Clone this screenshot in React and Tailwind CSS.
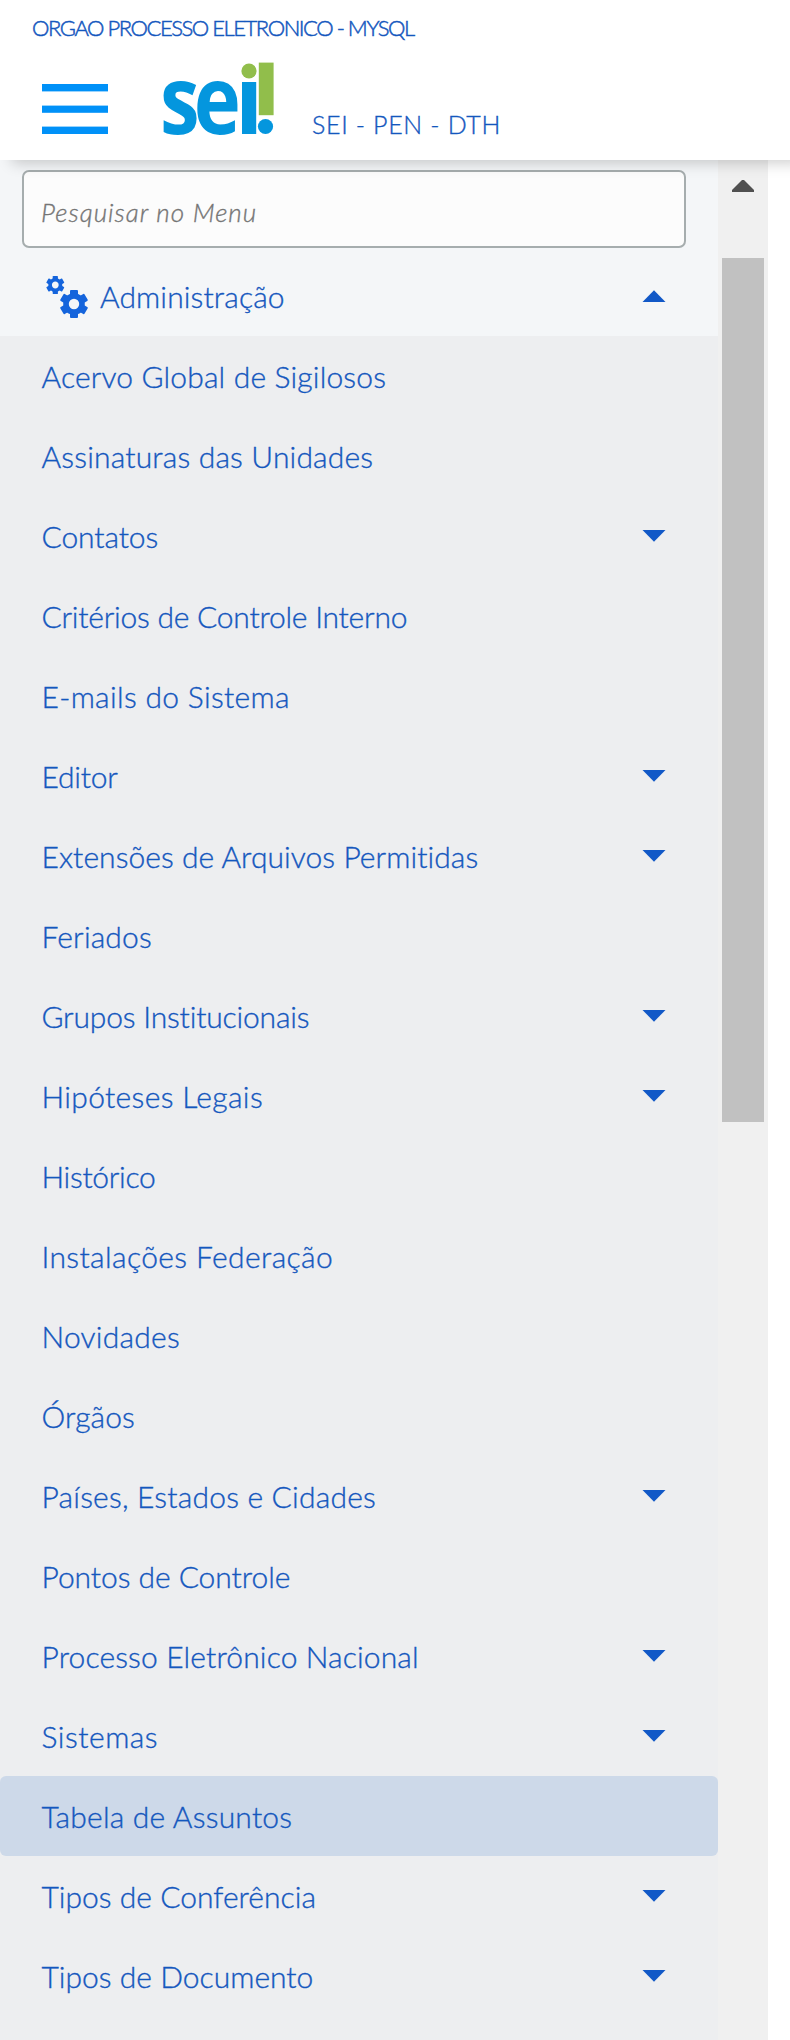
const MENU = [
  { label: "Acervo Global de Sigilosos", tracking: "tracking-[0.16px]" },
  { label: "Assinaturas das Unidades", tracking: "tracking-[0.17px]" },
  { label: "Contatos", tracking: "tracking-[-0.1px]", sub: true },
  { label: "Critérios de Controle Interno", tracking: "tracking-[-0.23px]" },
  { label: "E-mails do Sistema", tracking: "tracking-[0.32px]" },
  { label: "Editor", tracking: "tracking-[-0.2px]", sub: true },
  { label: "Extensões de Arquivos Permitidas", tracking: "tracking-[0.06px]", sub: true },
  { label: "Feriados", tracking: "tracking-[0.15px]" },
  { label: "Grupos Institucionais", tracking: "tracking-[-0.18px]", sub: true },
  { label: "Hipóteses Legais", tracking: "tracking-[0.35px]", sub: true },
  { label: "Histórico", tracking: "tracking-[-0.3px]" },
  { label: "Instalações Federação", tracking: "tracking-[0.38px]" },
  { label: "Novidades", tracking: "tracking-[0.25px]" },
  { label: "Órgãos", tracking: "tracking-[0.1px]" },
  { label: "Países, Estados e Cidades", tracking: "tracking-[0.2px]", sub: true },
  { label: "Pontos de Controle", tracking: "tracking-[-0.05px]" },
  { label: "Processo Eletrônico Nacional", tracking: "tracking-[0.14px]", sub: true },
  { label: "Sistemas", tracking: "tracking-[0.5px]", sub: true },
  { label: "Tabela de Assuntos", tracking: "tracking-[0.22px]", active: true },
  { label: "Tipos de Conferência", tracking: "tracking-[0.02px]", sub: true },
  { label: "Tipos de Documento", tracking: "tracking-[0.02px]", sub: true },
];

const TEETH = [0, 60, 120, 180, 240, 300];

function Gear({ cx, cy, scale }) {
  return (
    <g transform={`translate(${cx} ${cy}) scale(${scale})`}>
      <circle r="8" fill="none" stroke="#1464dc" strokeWidth="5.6" />
      {TEETH.map((a) => (
        <rect key={a} x="-4" y="-14" width="8" height="5.5" rx="1" fill="#1464dc" transform={`rotate(${a})`} />
      ))}
    </g>
  );
}

function Gears() {
  return (
    <svg className="block h-[44px] w-[44px] shrink-0" viewBox="0 0 44 44">
      <Gear cx={10.3} cy={11} scale={0.65} />
      <Gear cx={29} cy={30} scale={1} />
    </svg>
  );
}

function Caret({ up }) {
  return (
    <svg className="block h-[12px] w-[24px] shrink-0" viewBox="0 0 24 12">
      <path d={up ? "M0.5 12 L12 0.3 L23.5 12 Z" : "M0.5 0 L12 11.7 L23.5 0 Z"} fill="#1158c7" />
    </svg>
  );
}

function Logo() {
  return (
    <svg className="block h-[80px] w-[116px] overflow-visible" viewBox="0 0 116 80" fontFamily="'Open Sans', sans-serif" fontWeight="700">
      <g fill="#0496de">
        <text fontSize="96" letterSpacing="-7" transform="translate(0 74) scale(0.83 1)">se</text>
        <rect x="82" y="22" width="14.2" height="52" />
        <circle cx="105.5" cy="66.5" r="7.6" />
      </g>
      <g fill="#91be4b">
        <circle cx="89" cy="11" r="7.6" />
        <rect x="98.8" y="2.6" width="14.8" height="52.6" />
      </g>
    </svg>
  );
}

export default function App() {
  return (
    <div className="flex h-[2040px] w-[790px] flex-col overflow-hidden bg-white font-['Lato',sans-serif] font-light text-[#1457be] [-webkit-text-stroke:0.35px]">
      <header className="relative z-10 flex h-[160px] shrink-0 flex-col bg-white shadow-[12px_3px_14px_rgba(0,0,0,0.2)]">
        <div className="h-[60px] whitespace-nowrap pl-[32px] pt-[13px] text-[22px] leading-[30px] tracking-[-1.46px] [-webkit-text-stroke:0.5px]">
          ORGAO PROCESSO ELETRONICO - MYSQL
        </div>
        <div className="flex h-[80px] items-start pl-[42px]">
          <svg className="mt-[24px] block h-[50px] w-[66px]" viewBox="0 0 66 50" fill="#0091f8">
            <rect y="0" width="66" height="7.4" />
            <rect y="21.6" width="66" height="7.2" />
            <rect y="42.6" width="66" height="7.4" />
          </svg>
          <div className="ml-[52px]">
            <Logo />
          </div>
          <div className="ml-[36px] mt-[49px] whitespace-nowrap text-[25px] leading-[30px] tracking-[0.65px]">SEI - PEN - DTH</div>
        </div>
      </header>

      <div className="flex flex-1">
        <nav className="w-[718px] bg-[#f4f6f8]">
          <div className="h-[96px] pl-[22px] pt-[10px]">
            <div className="flex h-[78px] w-[664px] items-center rounded-[7px] border-2 border-[#a6adae] bg-[#fcfcfc] pl-[17px] pt-[6px] text-[26px] italic tracking-[1px] text-[#757575]">
              Pesquisar no Menu
            </div>
          </div>
          <div className="flex h-[80px] items-center pl-[45px] pr-[52px]">
            <Gears />
            <span className="ml-[11px] flex-1 text-[30px] leading-[40px] tracking-[0.12px]">Administração</span>
            <Caret up />
          </div>
          <ul className="h-[1704px] bg-[#edeef0]">
            {MENU.map((m) => (
              <li
                key={m.label}
                className={`flex h-[80px] items-center rounded-[6px] pl-[41.5px] pr-[52px] ${m.active ? "bg-[#cdd9e9]" : ""}`}
              >
                <span className={`flex-1 whitespace-nowrap text-[30px] leading-[40px] ${m.tracking}`}>{m.label}</span>
                {m.sub && <Caret />}
              </li>
            ))}
          </ul>
        </nav>
        <div className="flex w-[50px] flex-col items-center bg-[#f0f0f0] pt-[20px]">
          <svg className="block h-[12px] w-[22px]" viewBox="0 0 22 12">
            <path d="M0 12 V10 L10 0 H12 L22 10 V12 Z" fill="#505050" />
          </svg>
          <div className="mt-[66px] h-[864px] w-[42px] bg-[#c1c1c1]" />
        </div>
      </div>
    </div>
  );
}
